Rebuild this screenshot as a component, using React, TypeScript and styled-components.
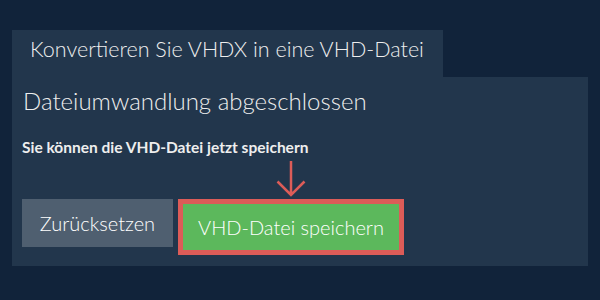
import * as React from "react";
import styled, { createGlobalStyle } from "styled-components";

const GlobalStyle = createGlobalStyle`
  html, body {
    margin: 0;
    padding: 0;
    background: #11233a;
  }
  body {
    font-family: Lato, "Open Sans", sans-serif;
    color: #eeeeee;
  }
`;

const Page = styled.div`
  width: 600px;
  height: 300px;
  box-sizing: border-box;
  padding: 30px 12px 0 12px;
`;

const Tab = styled.div`
  width: 431px;
  height: 47px;
  box-sizing: border-box;
  padding: 5px 0 0 18px;
  background: #22364c;
  font-size: 21.5px;
  font-weight: 300;
  line-height: 28px;
  white-space: nowrap;
`;

const Panel = styled.div`
  background: #22364c;
  height: 189px;
  box-sizing: border-box;
  padding: 9px 10px 0 10px;
`;

const Heading = styled.h2`
  margin: 0 0 0 1px;
  font-weight: 300;
  font-size: 24px;
  line-height: 30px;
  white-space: nowrap;
`;

const Note = styled.p`
  margin: 21px 0 0 0;
  font-weight: 700;
  font-size: 15.5px;
  line-height: 20px;
  white-space: nowrap;
`;

const Actions = styled.div`
  display: flex;
  align-items: flex-start;
  gap: 5px;
  margin-top: 42px;
`;

const Button = styled.button<{ $variant: "reset" | "save" }>`
  font-family: Lato, "Open Sans", sans-serif;
  font-weight: 300;
  font-size: 20px;
  color: #ffffff;
  cursor: pointer;
  box-sizing: border-box;
  padding: 0;
  background: ${(p) => (p.$variant === "save" ? "#5cb85c" : "#4f5f70")};
  border: ${(p) => (p.$variant === "save" ? "5px solid #dc5c58" : "none")};
  width: ${(p) => (p.$variant === "save" ? "226px" : "151px")};
  height: ${(p) => (p.$variant === "save" ? "56px" : "48px")};
`;

const SaveWrap = styled.div`
  position: relative;
`;

const Arrow = styled.svg`
  position: absolute;
  left: 50%;
  bottom: 100%;
  margin-left: -15px;
  margin-bottom: 2px;
  display: block;
`;

export default function App() {
  return (
    <>
      <GlobalStyle />
      <Page>
        <Tab>Konvertieren Sie VHDX in eine VHD-Datei</Tab>
        <Panel>
          <Heading>Dateiumwandlung abgeschlossen</Heading>
          <Note>Sie können die VHD-Datei jetzt speichern</Note>
          <Actions>
            <Button $variant="reset">Zurücksetzen</Button>
            <SaveWrap>
              <Arrow width="30" height="36" viewBox="0 0 30 36">
                <path
                  d="M15 0 V34 M1.5 20.5 L15 34 L28.5 20.5"
                  fill="none"
                  stroke="#dc5c58"
                  strokeWidth="2.5"
                />
              </Arrow>
              <Button $variant="save">VHD-Datei speichern</Button>
            </SaveWrap>
          </Actions>
        </Panel>
      </Page>
    </>
  );
}
